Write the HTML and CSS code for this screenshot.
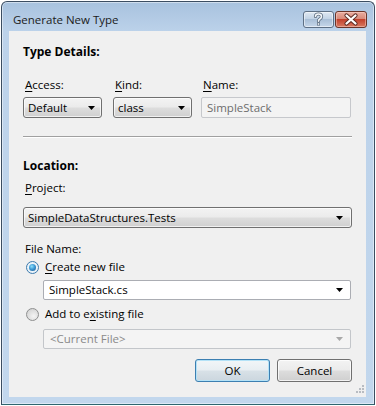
FILE: index.html
```html
<!DOCTYPE html>
<html>
<head>
<meta charset="utf-8">
<link rel="stylesheet" href="styles.css">
</head>
<body>
<div class="window">
  <div class="titlebar">
    <span class="title">Generate New Type</span>
    <div class="caption-buttons">
      <div class="cbtn help"><svg width="31" height="17" viewBox="0 0 31 17"><path d="M12.5 5.5 Q12.5 3 15.5 3 Q18.5 3 18.5 5.5 Q18.5 7.2 16.5 8.2 Q15.5 8.8 15.5 10.2" fill="none" stroke="#5a6b7e" stroke-width="3.2" stroke-linecap="round"/><path d="M12.5 5.5 Q12.5 3 15.5 3 Q18.5 3 18.5 5.5 Q18.5 7.2 16.5 8.2 Q15.5 8.8 15.5 10.2" fill="none" stroke="#f4f7fa" stroke-width="1.6" stroke-linecap="round"/><rect x="14" y="11.5" width="3" height="3" fill="#5a6b7e"/><rect x="14.7" y="12.2" width="1.6" height="1.6" fill="#f4f7fa"/></svg></div>
      <div class="cbtn close"><svg width="32" height="17" viewBox="0 0 32 17"><path d="M11.5 4.5 L20.5 12.5 M20.5 4.5 L11.5 12.5" stroke="#5b2a22" stroke-width="4.2" stroke-linecap="round"/><path d="M11.5 4.5 L20.5 12.5 M20.5 4.5 L11.5 12.5" stroke="#ffffff" stroke-width="2.3" stroke-linecap="round"/></svg></div>
    </div>
  </div>
  <div class="client">
    <div class="heading">Type Details:</div>
    <div class="row labels">
      <div class="lbl w79"><u>A</u>ccess:</div>
      <div class="lbl w79 ml11"><u>K</u>ind:</div>
      <div class="lbl w150 ml9"><u>N</u>ame:</div>
    </div>
    <div class="row controls">
      <div class="select w79"><span>Default</span><svg class="arrow" width="7" height="4" viewBox="0 0 7 4"><polygon points="0,0 7,0 3.5,4" fill="#000"/></svg></div>
      <div class="select w79 ml11"><span>class</span><svg class="arrow" width="7" height="4" viewBox="0 0 7 4"><polygon points="0,0 7,0 3.5,4" fill="#000"/></svg></div>
      <div class="textbox w150 ml9"><span>SimpleStack</span></div>
    </div>
    <div class="separator"></div>
    <div class="heading loc">Location:</div>
    <div class="lbl proj-lbl"><u>P</u>roject:</div>
    <div class="select wide"><span>SimpleDataStructures.Tests</span><svg class="arrow" width="7" height="4" viewBox="0 0 7 4"><polygon points="0,0 7,0 3.5,4" fill="#000"/></svg></div>
    <div class="lbl file-lbl">File Name:</div>
    <div class="radio-row r1"><span class="radio checked"></span><span><u>C</u>reate new file</span></div>
    <div class="combo c1"><span>SimpleStack.cs</span><svg class="arrow" width="7" height="4" viewBox="0 0 7 4"><polygon points="0,0 7,0 3.5,4" fill="#000"/></svg></div>
    <div class="radio-row r2"><span class="radio"></span><span>Add to e<u>x</u>isting file</span></div>
    <div class="combo disabled c2"><span>&lt;Current File&gt;</span><svg class="arrow" width="7" height="4" viewBox="0 0 7 4"><polygon points="0,0 7,0 3.5,4" fill="#a8a8a8"/></svg></div>
    <div class="buttons">
      <div class="btn default">OK</div>
      <div class="btn">Cancel</div>
    </div>
    <svg class="grip" width="10" height="10" viewBox="0 0 10 10">
      <g fill="#b8bcc2">
        <rect x="8" y="0" width="2" height="2"/>
        <rect x="5" y="3" width="2" height="2"/><rect x="8" y="3" width="2" height="2"/>
        <rect x="2" y="6" width="2" height="2"/><rect x="5" y="6" width="2" height="2"/><rect x="8" y="6" width="2" height="2"/>
      </g>
    </svg>
  </div>
</div>
</body>
</html>
```
FILE: styles.css
```css
html, body {
  margin: 0;
  padding: 0;
  background: #ffffff;
}
body {
  width: 376px;
  height: 406px;
  overflow: hidden;
  font-family: "Open Sans", "Noto Sans", sans-serif;
  font-size: 11.5px;
  line-height: 16px;
  color: #000;
}
.window {
  margin: 1px;
  width: 374px;
  height: 404px;
  box-sizing: border-box;
  border: 1px solid #3b4d61;
  border-bottom-color: #2f6670;
  border-radius: 6px 6px 0 0;
  background: linear-gradient(#a8c2de, #bcd2ea 30px, #c2d7ed 100%);
  box-shadow: inset 0 0 0 1px rgba(255,255,255,0.45);
  display: flex;
  flex-direction: column;
}
.titlebar {
  height: 29px;
  flex: none;
  display: flex;
  justify-content: space-between;
  align-items: flex-start;
  padding: 0 7px 0 11px;
}
.title {
  margin-top: 10px;
  color: #1b1b1b;
  font-size: 11.5px;
}
.caption-buttons {
  margin-top: 9px;
  display: flex;
  gap: 1px;
}
.cbtn {
  height: 17px;
  box-sizing: border-box;
  border: 1px solid #5d6f84;
  border-radius: 3px;
  overflow: hidden;
  display: flex;
  align-items: center;
  justify-content: center;
}
.cbtn svg { display: block; flex: none; }
.help {
  width: 31px;
  background: linear-gradient(#dfe8f2, #c3d4e6 45%, #a9bfd7 50%, #c6d7ea);
  box-shadow: inset 0 0 0 1px rgba(255,255,255,0.5);
}
.close {
  width: 32px;
  border-color: #6a3429;
  background: linear-gradient(#e9ada0, #d88a7a 45%, #c3412c 50%, #d77a62);
  box-shadow: inset 0 0 0 1px rgba(255,220,210,0.45);
}
.client {
  flex: 1;
  margin: 0 8px 7px 7px;
  background: #f0f0f0;
  padding: 13px 14px 0 14px;
  display: flex;
  flex-direction: column;
  position: relative;
}
.heading {
  font-weight: bold;
  font-size: 12px;
  height: 16px;
}
.heading.loc { margin-top: 20px; }
.row { display: flex; }
.labels { margin-top: 17px; height: 16px; }
.controls { margin-top: 4px; height: 21px; }
.lbl { padding-left: 2px; box-sizing: border-box; height: 16px; }
.w79 { width: 79px; flex: none; }
.w150 { width: 150px; flex: none; }
.ml11 { margin-left: 11px; }
.ml9 { margin-left: 9px; }
u { text-decoration: underline; text-underline-offset: 2px; text-decoration-thickness: 1px; }
.select, .combo, .textbox {
  box-sizing: border-box;
  display: flex;
  align-items: center;
  justify-content: space-between;
  padding: 0 6px 0 4px;
}
.select {
  height: 21px;
  border: 1px solid #707070;
  border-radius: 3px;
  background: linear-gradient(#f3f3f3, #ebebeb 48%, #dddddd 52%, #d0d0d0);
  box-shadow: inset 0 0 0 1px rgba(255,255,255,0.7);
}
.arrow { display: block; flex: none; }
.textbox {
  height: 21px;
  border: 1px solid #c6c8cc;
  border-radius: 2px;
  background: #f3f3f3;
  color: #6d6d6d;
  padding-left: 5px;
}
.separator {
  margin-top: 18px;
  height: 1px;
  background: #a0a0a0;
  border-bottom: 1px solid #ffffff;
}
.proj-lbl { margin-top: 6px; }
.select.wide { margin-top: 11px; width: 100%; padding-right: 8px; }
.file-lbl { margin-top: 13px; }
.radio-row {
  display: flex;
  align-items: center;
  height: 16px;
  padding-left: 3px;
}
.radio-row.r1 { margin-top: 2px; }
.radio-row.r2 { margin-top: 6px; }
.radio {
  width: 13px;
  height: 13px;
  box-sizing: border-box;
  border-radius: 50%;
  border: 1px solid #8e8f8f;
  background: radial-gradient(circle at 60% 65%, #f4f4f4 0, #dcdcdc 60%, #cbcbcb 100%);
  margin-right: 6px;
  flex: none;
  position: relative;
}
.radio.checked::after {
  content: "";
  position: absolute;
  left: 2px;
  top: 2px;
  width: 7px;
  height: 7px;
  border-radius: 50%;
  background: radial-gradient(circle at 40% 35%, #8fe0f9 0, #3d9ad6 45%, #184f86 100%);
}
.radio.checked {
  border-color: #3d7bad;
  background: radial-gradient(circle, #ffffff 0, #dceaf5 100%);
}
.combo {
  height: 20px;
  margin-left: 20px;
  margin-right: 1px;
  border: 1px solid #abadb3;
  border-radius: 2px;
  background: #ffffff;
  padding-left: 5px;
  padding-right: 7px;
}
.combo.c1 { margin-top: 5px; }
.combo.c2 { margin-top: 7px; }
.combo.disabled {
  background: #f4f4f4;
  border-color: #c3c6ca;
  color: #8a8a8a;
  padding-left: 6px;
}
.buttons {
  margin-top: 10px;
  display: flex;
  justify-content: flex-end;
  gap: 7px;
}
.btn {
  width: 75px;
  height: 23px;
  box-sizing: border-box;
  border: 1px solid #707070;
  border-radius: 3px;
  background: linear-gradient(#f3f3f3, #ebebeb 48%, #dddddd 52%, #cfcfcf);
  box-shadow: inset 0 0 0 1px rgba(255,255,255,0.75);
  display: flex;
  align-items: center;
  justify-content: center;
}
.btn.default {
  border-color: #3c7fb1;
  box-shadow: inset 0 0 0 1px #b4e2f7;
  background: linear-gradient(#f2f6f8, #e8eef2 48%, #d8e1e7 52%, #cbd6de);
}
.grip {
  position: absolute;
  right: 2px;
  bottom: 2px;
}
```
